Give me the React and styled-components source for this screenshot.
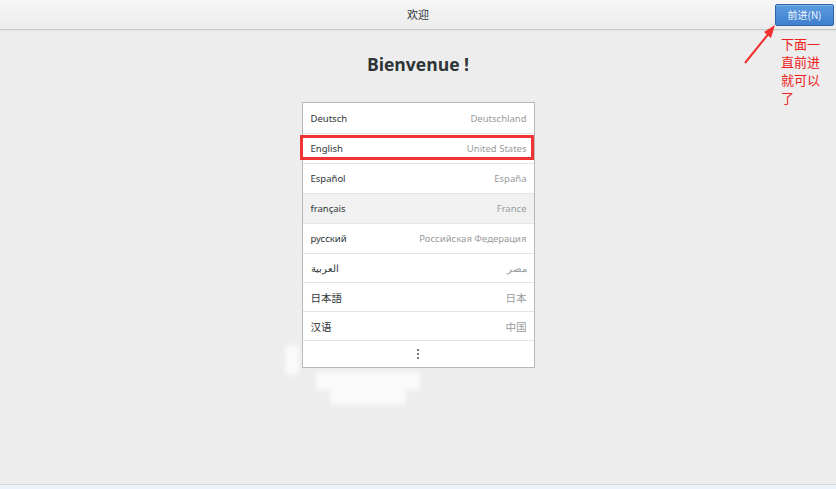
import React from "react";
import styled, { createGlobalStyle } from "styled-components";

const Global = createGlobalStyle`
  html, body { margin: 0; padding: 0; }
  body { background: #ededed; font-family: "Noto Sans", "Noto Sans CJK SC", sans-serif; }
  #root { width: 836px; height: 489px; overflow: hidden; }
`;

const Page = styled.div`
  position: relative;
  width: 836px;
  height: 489px;
  display: flex;
  flex-direction: column;
  background: #ededed;
`;

const Header = styled.div`
  height: 29px;
  flex: none;
  display: grid;
  grid-template-columns: 1fr auto 1fr;
  align-items: center;
  background: linear-gradient(#f6f6f6, #ececec);
  border-bottom: 1px solid #c8c8c8;
  box-shadow: 0 1px 0 #e2e2e2;
`;

const HeaderTitle = styled.div`
  grid-column: 2;
  font-family: "Noto Sans CJK SC", sans-serif;
  font-size: 11px;
  line-height: 14px;
  color: #2e3436;
  margin-top: -2px;
`;

const HeaderRight = styled.div`
  grid-column: 3;
  display: flex;
  justify-content: flex-end;
  padding-right: 2px;
`;

const NextButton = styled.button`
  width: 59px;
  height: 22px;
  margin-top: 0;
  border: 1px solid #2c65ad;
  border-radius: 2px;
  background: linear-gradient(#5b9be0, #3e80cf);
  color: #f4f8ff;
  font-family: "Noto Sans CJK SC", sans-serif;
  font-size: 10px;
  padding: 0;
  box-shadow: inset 0 1px 0 rgba(255,255,255,0.25);
`;

const Main = styled.div`
  flex: 1;
  display: flex;
  flex-direction: column;
  align-items: center;
`;

const Title = styled.h1`
  margin: 20px 0 0;
  height: 28px;
  font-family: "Open Sans", sans-serif;
  font-weight: 700;
  font-size: 17.5px;
  line-height: 28px;
  color: #2e3436;
`;

const List = styled.div`
  margin-top: 24px;
  width: 231px;
  background: #ffffff;
  border: 1px solid #b8b8b8;
  display: flex;
  flex-direction: column;
`;

const Row = styled.div`
  height: ${(p) => p.$h}px;
  display: flex;
  align-items: center;
  justify-content: space-between;
  padding: 0 7px 0 8px;
  background: ${(p) => (p.$hover ? "#f1f1f1" : "#ffffff")};
  border-top: ${(p) => (p.$first ? "none" : "1px solid #e4e4e4")};
  box-sizing: border-box;
`;

const Lang = styled.span`
  color: #2e3436;
  font-family: "Noto Sans", "Noto Sans CJK JP", sans-serif;
  font-size: ${(p) => (p.$cjk ? "10.5px" : "9.5px")};
`;

const Region = styled.span`
  color: #999b9c;
  font-family: "Noto Sans", "Noto Sans CJK JP", sans-serif;
  font-size: ${(p) => (p.$cjk ? "10.5px" : "9.5px")};
`;

const MoreRow = styled.div`
  height: 27px;
  box-sizing: border-box;
  border-top: 1px solid #e4e4e4;
  display: flex;
  align-items: center;
  justify-content: center;
`;

const Dots = styled.div`
  display: flex;
  flex-direction: column;
  gap: 2px;
  span {
    width: 2px;
    height: 2px;
    background: #777;
  }
`;

const Highlight = styled.div`
  position: absolute;
  left: 300px;
  top: 135px;
  width: 234px;
  height: 25px;
  box-sizing: border-box;
  border: 3px solid #f03434;
  pointer-events: none;
`;

const Note = styled.div`
  position: absolute;
  left: 781px;
  top: 35px;
  width: 42px;
  font-family: "Noto Sans CJK SC", sans-serif;
  font-size: 13px;
  line-height: 18px;
  color: #f02020;
`;

const Arrow = styled.svg`
  position: absolute;
  left: 740px;
  top: 22px;
`;

const Smudge = styled.div`
  position: absolute;
  left: ${(p) => p.$x}px;
  top: ${(p) => p.$y}px;
  width: ${(p) => p.$w}px;
  height: ${(p) => p.$h}px;
  background: rgba(255, 255, 255, 0.7);
  filter: blur(2px);
`;

const Footer = styled.div`
  height: 4px;
  flex: none;
  border-top: 1px solid #d8d8d8;
  background: #eef3fb;
`;

const rows = [
  { l: "Deutsch", r: "Deutschland", h: 30 },
  { l: "English", r: "United States", h: 30 },
  { l: "Español", r: "España", h: 30 },
  { l: "français", r: "France", h: 30, hover: true },
  { l: "русский", r: "Российская Федерация", h: 30 },
  { l: "العربية", r: "مصر", h: 29 },
  { l: "日本語", r: "日本", h: 29, cjk: true },
  { l: "汉语", r: "中国", h: 29, cjk: true },
];

export default function App() {
  return (
    <>
      <Global />
      <Page>
        <Header>
          <HeaderTitle>欢迎</HeaderTitle>
          <HeaderRight>
            <NextButton>前进(N)</NextButton>
          </HeaderRight>
        </Header>
        <Main>
          <Title>Bienvenue !</Title>
          <List>
            {rows.map((r, i) => (
              <Row key={r.l} $h={r.h} $first={i === 0} $hover={r.hover}>
                <Lang $cjk={r.cjk}>{r.l}</Lang>
                <Region $cjk={r.cjk}>{r.r}</Region>
              </Row>
            ))}
            <MoreRow>
              <Dots>
                <span />
                <span />
                <span />
              </Dots>
            </MoreRow>
          </List>
        </Main>
        <Footer />
        <Highlight />
        <Smudge $x={285} $y={345} $w={14} $h={30} />
        <Smudge $x={316} $y={372} $w={104} $h={18} />
        <Smudge $x={330} $y={388} $w={76} $h={17} />
        <Arrow width="40" height="44" viewBox="0 0 40 44">
          <line x1="5" y1="41" x2="30" y2="10" stroke="#f03030" strokeWidth="2" />
          <polygon points="35,3 24,10 31,16" fill="#f03030" />
        </Arrow>
        <Note>下面一直前进就可以了</Note>
      </Page>
    </>
  );
}
